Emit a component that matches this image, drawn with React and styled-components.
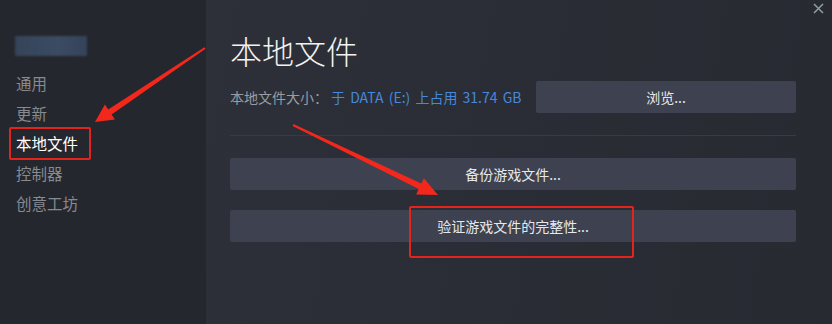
import React from 'react';
import styled, {createGlobalStyle} from "styled-components";

const GlobalStyle = createGlobalStyle`
  html, body {
    margin: 0;
    padding: 0;
    background: #24272e;
  }
  #root {
    width: 832px;
    height: 324px;
  }
  * { box-sizing: border-box; }
`

const navItems = ["通用", "更新", "本地文件", "控制器", "创意工坊"];

export default function App() {
    return (
        <>
            <GlobalStyle/>
            <Window>
                <Sidebar>
                    <UserName/>
                    <NavList>
                        {navItems.map(item => (
                            <NavItem key={item} $active={item === "本地文件"}>{item}</NavItem>
                        ))}
                    </NavList>
                </Sidebar>
                <Main>
                    <Title>本地文件</Title>
                    <InfoRow>
                        <Label>本地文件大小：</Label>
                        <Link>于 DATA (E:) 上占用 31.74 GB</Link>
                        <BrowseButton>浏览...</BrowseButton>
                    </InfoRow>
                    <Divider/>
                    <Actions>
                        <Button>备份游戏文件...</Button>
                        <Button>验证游戏文件的完整性...</Button>
                    </Actions>
                </Main>
                <Close>
                    <svg width="11" height="11" viewBox="0 0 11 11">
                        <path d="M1 1 L10 10 M10 1 L1 10" stroke="#8c9aa4" strokeWidth="1.6"/>
                    </svg>
                </Close>
                <Marks>
                    <Mark $x={9} $y={127} $w={82} $h={33}/>
                    <Mark $x={409} $y={206} $w={225} $h={52}/>
                    <svg width="832" height="324" viewBox="0 0 832 324">
                        <polygon fill="#f2281d"
                                 points="205.6,48.8 111.6,114.5 114.9,119.5 95,122 104.9,104.5 108.2,109.5 204.4,47.2"/>
                        <polygon fill="#f2281d"
                                 points="292.6,125.9 418.7,189 416.1,194.4 438,195 423.9,178.2 421.3,183.6 293.4,124.1"/>
                    </svg>
                </Marks>
            </Window>
        </>
    );
}

const Window = styled.div`
  position: relative;
  display: flex;
  width: 832px;
  height: 324px;
  overflow: hidden;
  font-family: "Noto Sans CJK SC", "Noto Sans", sans-serif;
`

const Sidebar = styled.div`
  width: 206px;
  flex-shrink: 0;
  background: #25272e;
  padding: 36px 0 0 15px;
  display: flex;
  flex-direction: column;
`

const UserName = styled.div`
  width: 72px;
  height: 20px;
  background: linear-gradient(90deg, #354459, #3b4b62 60%, #34435a);
  filter: blur(1px);
`

const NavList = styled.div`
  margin-top: 12px;
  display: flex;
  flex-direction: column;
`

const NavItem = styled.div`
  height: 30px;
  line-height: 30px;
  padding-left: 1px;
  font-size: 15.5px;
  color: ${p => p.$active ? "#ffffff" : "#868a91"};
`

const Main = styled.div`
  flex: 1;
  padding: 30px 36px 0 24px;
  background: linear-gradient(100deg, #2d3038 0%, #2a2d35 45%, #272a31 100%);
  display: flex;
  flex-direction: column;
`

const Title = styled.div`
  height: 40px;
  line-height: 40px;
  font-size: 32px;
  font-weight: 300;
  color: #f2f2f2;
`

const InfoRow = styled.div`
  margin-top: 11px;
  height: 32px;
  display: flex;
  align-items: center;
  font-size: 14px;
`

const Label = styled.span`
  color: #9a9ca2;
`

const Link = styled.span`
  color: #4688dc;
  margin-left: 3px;
  word-spacing: 2px;
`

const Button = styled.div`
  height: 32px;
  display: flex;
  align-items: center;
  justify-content: center;
  background: #3d4150;
  border-radius: 2px;
  color: #e8e8ea;
  font-size: 14px;
`

const BrowseButton = styled(Button)`
  width: 260px;
  margin-left: auto;
`

const Divider = styled.div`
  margin-top: 22px;
  height: 1px;
  background: #383b44;
`

const Actions = styled.div`
  margin-top: 22px;
  display: flex;
  flex-direction: column;
  gap: 20px;
`

const Close = styled.div`
  position: absolute;
  top: 3px;
  right: 8px;
  display: flex;
`

const Marks = styled.div`
  position: absolute;
  inset: 0;
  pointer-events: none;

  svg {
    position: absolute;
    inset: 0;
  }
`

const Mark = styled.div`
  position: absolute;
  left: ${p => p.$x}px;
  top: ${p => p.$y}px;
  width: ${p => p.$w}px;
  height: ${p => p.$h}px;
  border: 2.5px solid #e3241c;
  border-radius: 2px;
`
